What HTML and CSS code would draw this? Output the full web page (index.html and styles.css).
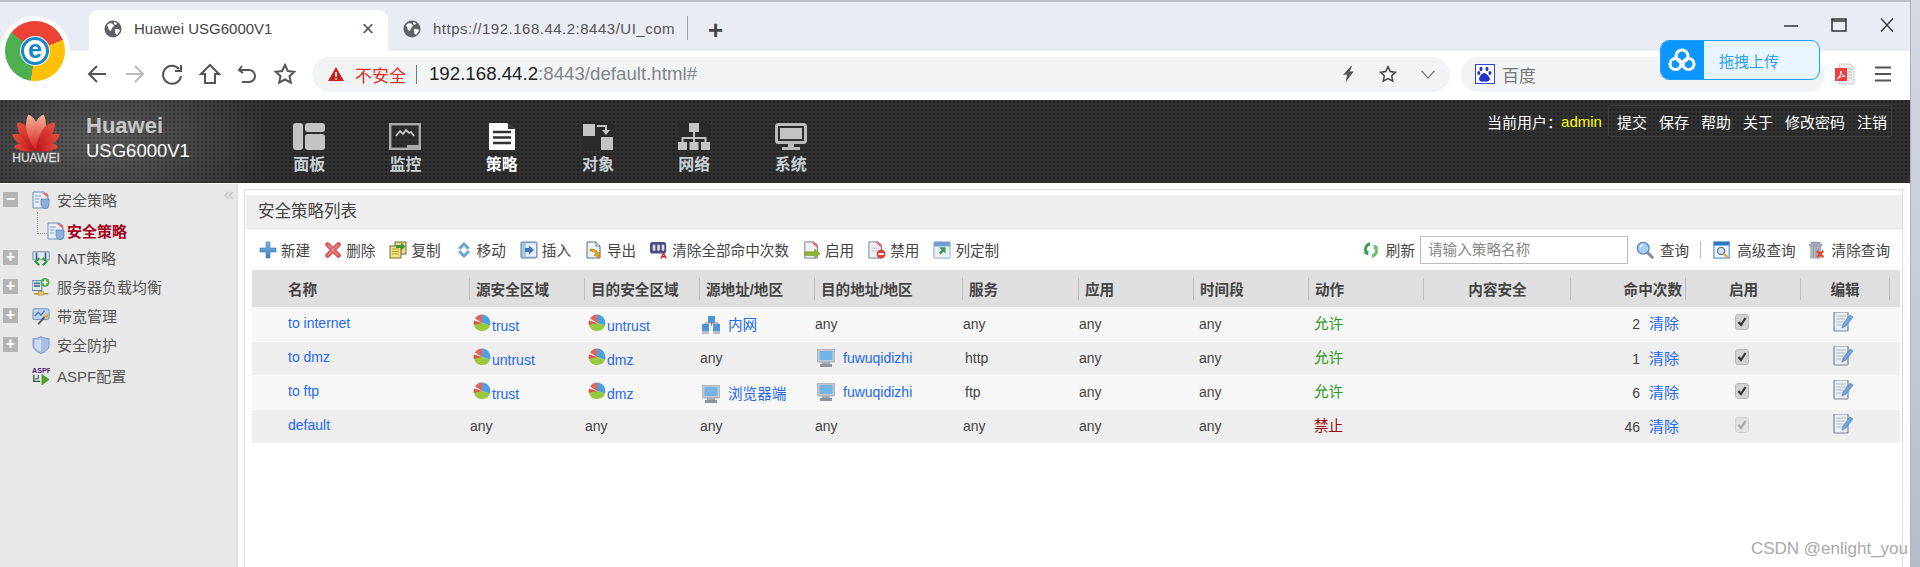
FILE: index.html
```html
<!DOCTYPE html>
<html lang="zh-CN">
<head>
<meta charset="utf-8">
<title>Huawei USG6000V1</title>
<link rel="stylesheet" href="styles.css">
</head>
<body>
<svg class="sprite" width="0" height="0">
  <defs>
    <linearGradient id="blueG" x1="0" y1="0" x2="0" y2="1"><stop offset="0" stop-color="#7db4e0"/><stop offset="1" stop-color="#3f7fb8"/></linearGradient>
    <linearGradient id="petal" gradientUnits="userSpaceOnUse" x1="0" y1="-36" x2="0" y2="0"><stop offset="0" stop-color="#e8503a"/><stop offset="1" stop-color="#b8101c"/></linearGradient>
    <linearGradient id="petalTop" gradientUnits="userSpaceOnUse" x1="0" y1="-36" x2="0" y2="0"><stop offset="0" stop-color="#f7b49a"/><stop offset="1" stop-color="#d0201f"/></linearGradient>
    <path id="pet" d="M0 0C-5-7-7-18-6-26C-5-31-4-34-2-36C2-34 4-30 5-25C6-16 3-6 0 0Z"/>
    <symbol id="globe" viewBox="0 0 18 18"><circle cx="9" cy="9" r="8.500" fill="#5f6368"/><path d="M3 5l3-2 3 1 1 2-2 2-1 3-2-1-1-3zM11 9l4 0 1 2-3 4-2-2z M10 2l3 1-1 2-2-1z" fill="#fff"/></symbol>
    <symbol id="add" viewBox="0 0 18 18"><path d="M7 1h4v6h6v4h-6v6H7v-6H1V7h6z" fill="url(#blueG)" stroke="#3a78ac" stroke-width=".6"/></symbol>
    <symbol id="del" viewBox="0 0 18 18"><path d="M3.500 3.500l11 11M14.500 3.500l-11 11" stroke="#d9565a" stroke-width="4.600" stroke-linecap="round"/><path d="M4 4l10 10M14 4L4 14" stroke="#ee8a8a" stroke-width="1.400" stroke-linecap="round"/></symbol>
    <symbol id="copy" viewBox="0 0 18 18"><rect x="6" y="1" width="11" height="12" fill="#e9d98a" stroke="#6f6a45"/><rect x="1" y="5" width="11" height="12" fill="#f3e27e" stroke="#6f6a45"/><path d="M3 8h7M3 10.500h7M3 13h7" stroke="#b09a35"/><path d="M7 4h5V1.500l4.500 4-4.500 4V7H7z" fill="#3a9a3a"/></symbol>
    <symbol id="move" viewBox="0 0 18 18"><path d="M9 1l6 6-2.500 1.500L9 5 5.500 8.500 3 7zM9 17l-6-6 2.500-1.500L9 13l3.500-3.500L15 11z" fill="#6ba3d6" stroke="#8fbfe6" stroke-width=".4"/></symbol>
    <symbol id="insert" viewBox="0 0 18 18"><rect x="1" y="1" width="16" height="16" rx="1" fill="#a9c6e2" stroke="#5d7ea4"/><rect x="6" y="2.500" width="10" height="13" fill="#e7eef6"/><path d="M5 7h4V4.500l5 4.500-5 4.500V11H5z" fill="#3e78ac"/></symbol>
    <symbol id="export" viewBox="0 0 18 18"><path d="M2 1h9l4 4v12H2z" fill="#eef1f6" stroke="#5f6d84"/><path d="M11 1v4h4" fill="#fff" stroke="#5f6d84"/><path d="M5 8c4 0 7 1 8 4l2-1-1 6-5-3 2-1c-1-2-3-3-6-3z" fill="#e8a21a" stroke="#a06a0a" stroke-width=".5"/></symbol>
    <symbol id="clearall" viewBox="0 0 20 20"><rect x="0" y="1" width="18" height="13" rx="3" fill="#4a4a86"/><rect x="3" y="4" width="3" height="7" rx="1.500" fill="#ddd"/><rect x="8" y="4" width="3" height="7" rx="1.500" fill="#ddd"/><rect x="13" y="4" width="3" height="7" rx="1.500" fill="#ddd"/><path d="M12 19.500l3-6 3 6M13.200 17.500h3.600" fill="none" stroke="#d81818" stroke-width="1.400"/></symbol>
    <symbol id="enable" viewBox="0 0 20 20"><path d="M2 1h10l4 4v14H2z" fill="#f1f2f5" stroke="#6e7890"/><path d="M9 1l7 7V3z" fill="#e66a6a"/><path d="M2 12h11V9l6 5-6 5v-3H2z" fill="#8fb52c" stroke="#5f7d14" stroke-width=".5"/></symbol>
    <symbol id="disable" viewBox="0 0 20 20"><path d="M1 1h10l4 4v14H1z" fill="#f1f2f5" stroke="#6e7890"/><path d="M8 1l7 7V3z" fill="#e66a6a"/><path d="M4 8h6M4 11h5" stroke="#aeb4c2"/><circle cx="14.500" cy="14.500" r="5" fill="#d8443c"/><rect x="11.500" y="13.500" width="6" height="2" fill="#fff"/></symbol>
    <symbol id="custom" viewBox="0 0 20 20"><rect x="1" y="1" width="18" height="18" rx="1" fill="#e9eff6" stroke="#8ea3bc"/><rect x="1" y="1" width="18" height="5" fill="#6f9fd2"/><path d="M7 7h7v7l-2.500-2-3 3-2-2 3-3z" fill="#3f9a55"/></symbol>
    <symbol id="refresh" viewBox="0 0 18 20"><path d="M8 1C2 3 0 8 2 13l-1 1 5 2 0-6-1.500 1C4 8 5 6 8 5z" fill="#3f9c55"/><path d="M10 19c6-2 8-7 6-12l1-1-5-2 0 6 1.500-1c.5 3-.5 5-3.500 6z" fill="#6cbf70"/></symbol>
    <symbol id="search" viewBox="0 0 20 20"><path d="M12 12l6 6" stroke="#8a8f9c" stroke-width="3.400" stroke-linecap="round"/><circle cx="8" cy="8" r="6.500" fill="#a9cdf0" stroke="#5d8cc0" stroke-width="1.500"/><path d="M4.500 7c.5-2 2-3 3.500-3" stroke="#fff" stroke-width="1.200" fill="none"/></symbol>
    <symbol id="adv" viewBox="0 0 20 20"><rect x="1" y="1" width="17" height="18" fill="#eef3f9" stroke="#2c77bd"/><rect x="1" y="1" width="17" height="4" fill="#2c77bd"/><circle cx="9" cy="11" r="4" fill="#cfe2f5" stroke="#5a7a9a" stroke-width="1.400"/><path d="M12 14l4 4" stroke="#e0a020" stroke-width="2.200"/></symbol>
    <symbol id="trash" viewBox="0 0 20 20"><rect x="3" y="1" width="11" height="2" fill="#8a8f9a"/><rect x="1" y="3" width="15" height="3" fill="#a5a9b5"/><path d="M3 6h11v13H3z" fill="#bcc1cc" stroke="#7c818e" stroke-width=".6"/><path d="M6 7v11M9 7v11M12 7v11" stroke="#7f8594"/><path d="M10 11l7 7M17 11l-7 7" stroke="#e0492c" stroke-width="2.600"/></symbol>
    <symbol id="policy" viewBox="0 0 18 18"><path d="M1 1h11l4 3v13H1z" fill="#e8eef7" stroke="#6d93bb"/><path d="M9 1l7 6V3z" fill="#e96f6f"/><path d="M3 5h6M3 8h4M3 11h4" stroke="#7da2c8"/><path d="M9 8h8v5c0 2.500-2 4-4 5-2-1-4-2.500-4-5z" fill="#8fb0da" stroke="#5279ad" stroke-width=".7"/></symbol>
    <symbol id="nat" viewBox="0 0 20 18"><path d="M1 2h18v9H1z" fill="#dde6ef" stroke="#6e8298"/><path d="M5 3v7M15 3v7" stroke="#4d6a86" stroke-width="2"/><path d="M8 9l-4 4 4 4M12 9l4 4-4 4" fill="none" stroke="#2d9a45" stroke-width="2.400"/></symbol>
    <symbol id="server" viewBox="0 0 20 20"><rect x="0" y="3" width="11" height="11" fill="#dfe8f3" stroke="#4f6f9c"/><rect x="2" y="5" width="7" height="2" fill="#4a76ad"/><rect x="2" y="8" width="7" height="2" fill="#4a76ad"/><circle cx="14.500" cy="5" r="5" fill="#4fb04f"/><path d="M14.500 2v6M11.500 5h6" stroke="#fff" stroke-width="1.600"/><path d="M10 14v3M2 17.500h16" stroke="#b09030" stroke-width="1.500"/><rect x="7" y="15" width="6" height="4" fill="#e9c75e" stroke="#9c8330" stroke-width=".5"/></symbol>
    <symbol id="band" viewBox="0 0 20 20"><rect x="1" y="2" width="18" height="12" rx="2" fill="#bcd2ec" stroke="#6a8ab0"/><path d="M3 10l4-4 3 3 4-5" stroke="#3f6ea8" stroke-width="1.400" fill="none"/><path d="M7 19l7-8" stroke="#5c5c5c" stroke-width="2.200"/><path d="M13 11l3-3 3 1-2 3z" fill="#e2a028"/></symbol>
    <symbol id="shield" viewBox="0 0 18 18"><path d="M9 .5c2 1.500 5 2 8 2v7c0 4-4 6.500-8 8-4-1.500-8-4-8-8v-7c3 0 6-.5 8-2z" fill="#aabfe2" stroke="#7e96c4"/><path d="M9 2.500v13c-3-1.200-6-3-6-6.500V4c2.500 0 4.500-.5 6-1.500z" fill="#d0dcf0"/></symbol>
    <symbol id="aspf" viewBox="0 0 20 20"><text x="0" y="7" class="aspf-txt">ASPF</text><path d="M2 9v7h7" fill="none" stroke="#2a5a2a" stroke-width="1.400"/><path d="M7 9v4h-4" fill="none" stroke="#555" stroke-width="1.200"/><path d="M11 8l8 6-8 6z" fill="#4aa52a" stroke="#2d7a1c" stroke-width=".5"/></symbol>
    <symbol id="zone" viewBox="0 0 18 18"><path d="M9 9L2 4.500A8.500 8.500 0 0 1 9 .5z" fill="#e0675c"/><path d="M9 9V.5a8.500 8.500 0 0 1 8 11z" fill="#4e9fdc"/><path d="M9 9l8 2.500A8.500 8.500 0 0 1 1.500 12.500L1 7z" fill="#97c93c"/><path d="M1 6.500L9 9 .8 11A8.500 8.500 0 0 1 1 6.500z" fill="#d9574e"/></symbol>
    <symbol id="lan" viewBox="0 0 18 18"><rect x="6" y="0" width="7" height="7" fill="#4f94d8"/><rect x="0" y="8" width="7" height="7" fill="#4f94d8"/><rect x="11" y="8" width="7" height="7" fill="#4f94d8"/><path d="M9.500 7v3M3 8v-1h13v1" stroke="#7a8592" fill="none"/><rect x="0" y="15" width="7" height="3" fill="#b5bcc6"/><rect x="11" y="15" width="7" height="3" fill="#b5bcc6"/></symbol>
    <symbol id="host" viewBox="0 0 18 18"><rect x="0" y="0" width="18" height="13" rx="1" fill="#c3c8cf" stroke="#8f959d" stroke-width=".6"/><rect x="2.500" y="2" width="13" height="9" fill="#74b4e6"/><rect x="5" y="13" width="8" height="2" fill="#a7acb4"/><rect x="3" y="15" width="12" height="3" fill="#8f949c"/></symbol>
    <symbol id="check" viewBox="0 0 14 16"><rect x=".5" y=".5" width="13" height="15" rx="2.500" fill="#d2d2d2" stroke="#b8b8b8"/><path d="M3.500 8l2.500 3 4.500-7" fill="none" stroke="#333" stroke-width="2.200"/></symbol>
    <symbol id="checkoff" viewBox="0 0 14 16"><rect x=".5" y=".5" width="13" height="15" rx="2.500" fill="#e2e2e2" stroke="#d2d2d2"/><path d="M3.500 8l2.500 3 4.500-7" fill="none" stroke="#a8a8a8" stroke-width="2.200"/></symbol>
    <symbol id="edit" viewBox="0 0 20 20"><rect x="1" y="0" width="14" height="19" rx="1" fill="#e9ecf0" stroke="#7e858e" stroke-width="1.200"/><path d="M3.500 4h9M3.500 7h9M3.500 10h7M3.500 13h5" stroke="#b4bac2"/><path d="M9 16l1-4 7-9 3 2-7 9z" fill="#6fa4dc" stroke="#3f74ae" stroke-width=".6"/></symbol>
  </defs>
</svg>

<div class="page">
  <div class="viewport">
    <div class="tabbar">
      <div class="tab tab-active">
        <svg class="tab-ico"><use href="#globe"/></svg>
        <span class="tab-title">Huawei USG6000V1</span>
        <span class="tab-x">×</span>
      </div>
      <div class="tab tab-other">
        <svg class="tab-ico"><use href="#globe"/></svg>
        <span class="tab-title tab-cut">https://192.168.44.2:8443/UI_com</span>
      </div>
      <span class="tab-sep"></span>
      <span class="tab-plus">+</span>
      <div class="winctl">
        <svg class="win-ico" viewBox="0 0 16 14"><path d="M1 8h14" stroke="#333" stroke-width="1.500"/></svg>
        <svg class="win-ico" viewBox="0 0 16 14"><rect x="1" y="1" width="14" height="12" fill="none" stroke="#333" stroke-width="1.500"/><path d="M1 3h14" stroke="#333" stroke-width="1.500"/></svg>
        <svg class="win-ico" viewBox="0 0 16 14"><path d="M2 .5l12 13M14 .5l-12 13" stroke="#333" stroke-width="1.300"/></svg>
      </div>
    </div>

    <div class="toolbar">
      <div class="navbtns">
        <svg class="nb" viewBox="0 0 22 22"><path d="M20 11H4M11 3l-8 8 8 8" fill="none" stroke="#555" stroke-width="2"/></svg>
        <svg class="nb" viewBox="0 0 22 22"><path d="M2 11h16M11 3l8 8-8 8" fill="none" stroke="#bbb" stroke-width="2"/></svg>
        <svg class="nb" viewBox="0 0 22 22"><path d="M18 6a9 9 0 1 0 2 7" fill="none" stroke="#555" stroke-width="2"/><path d="M20 2v6h-6" fill="none" stroke="#555" stroke-width="2"/></svg>
        <svg class="nb" viewBox="0 0 22 22"><path d="M11 2l9 9h-4v9H6v-9H2z" fill="none" stroke="#555" stroke-width="2"/></svg>
        <svg class="nb" viewBox="0 0 22 22"><path d="M6 3L3 7l4 3M3 7h10a5.500 5.500 0 0 1 0 12H6" fill="none" stroke="#555" stroke-width="2"/></svg>
        <svg class="nb" viewBox="0 0 22 22"><path d="M11 2l2.800 6 6.500.8-4.800 4.400 1.300 6.500L11 16.500l-5.800 3.200 1.300-6.500L1.700 8.800 8.200 8z" fill="none" stroke="#555" stroke-width="2"/></svg>
      </div>
      <div class="omni">
        <svg class="warn" viewBox="0 0 16 16"><path d="M8 1l8 14H0z" fill="#c5221f"/><rect x="7.200" y="6" width="1.600" height="5" fill="#fff"/><rect x="7.200" y="12" width="1.600" height="1.600" fill="#fff"/></svg>
        <span class="insecure">不安全</span>
        <span class="omni-sep"></span>
        <span class="url"><b>192.168.44.2</b>:8443/default.html#</span>
        <span class="omni-right">
          <svg class="om-ico" viewBox="0 0 18 22"><path d="M13 1L3 12h5l-2 9 10-13h-5l3-7z" fill="#555"/></svg>
          <svg class="om-ico" viewBox="0 0 22 22"><path d="M11 2l2.800 6 6.500.8-4.800 4.400 1.300 6.500L11 16.500l-5.800 3.200 1.300-6.500L1.700 8.800 8.200 8z" fill="none" stroke="#444" stroke-width="1.800"/></svg>
          <svg class="om-ico" viewBox="0 0 22 22"><path d="M3 7l8 9 8-9" fill="none" stroke="#777" stroke-width="1.500"/></svg>
        </span>
      </div>
      <div class="searchbox">
        <svg class="baidu" viewBox="0 0 20 20"><rect x=".5" y=".5" width="19" height="19" fill="#fff" stroke="#3344dd"/><ellipse cx="6" cy="5" rx="1.500" ry="2.200" fill="#2233cc"/><ellipse cx="12" cy="5" rx="1.500" ry="2.200" fill="#2233cc"/><ellipse cx="3.800" cy="9" rx="1.500" ry="2" fill="#2233cc"/><ellipse cx="15" cy="9" rx="1.500" ry="2" fill="#2233cc"/><path d="M9 9c-2 0-5 4-5 6s2 3 5 2.500c3 .5 6-.5 6-2.500s-4-6-6-6z" fill="#2233cc"/></svg>
        <span class="search-word">百度</span>
      </div>
      <div class="extras">
        <svg class="pdf" viewBox="0 0 20 22"><path d="M4 1h11l4 4v16H4z" fill="#eee" stroke="#ccc"/><path d="M12 6h5M12 9h5M12 12h5M12 15h5" stroke="#bbb"/><rect x="0" y="5" width="12" height="13" fill="#ef3e42"/><path d="M2 16c3-2 4-5 4-8 0 3 2 5 4 5-3 0-5 1-8 3z" fill="none" stroke="#fff"/></svg>
        <svg class="menu" viewBox="0 0 16 16"><path d="M0 1.500h16M0 8h16M0 14.500h16" stroke="#555" stroke-width="2"/></svg>
      </div>
    </div>

    <div class="upload">
      <span class="upload-ico">
        <svg class="cloud" viewBox="0 0 28 24"><g fill="none" stroke="#fff" stroke-width="3.200"><circle cx="14" cy="8" r="6"/><circle cx="7.500" cy="16" r="5.500"/><circle cx="20.500" cy="16" r="5.500"/></g></svg>
      </span>
      <span class="upload-txt">拖拽上传</span>
    </div>

    <div class="chromium"><span class="chromium-core">e</span></div>

    <header class="apphead">
      <div class="brand">
        <div class="hw-logo">
          <svg class="hw-flower" viewBox="-27 -38 54 40">
            <use href="#pet" fill="url(#petal)" transform="rotate(-78) scale(.62)"/>
            <use href="#pet" fill="url(#petal)" transform="rotate(-54) scale(.78)"/>
            <use href="#pet" fill="url(#petal)" transform="rotate(-31) scale(.92)"/>
            <use href="#pet" fill="url(#petalTop)" transform="rotate(-9)"/>
            <use href="#pet" fill="url(#petalTop)" transform="scale(-1 1) rotate(-9)"/>
            <use href="#pet" fill="url(#petal)" transform="scale(-1 1) rotate(-31) scale(.92)"/>
            <use href="#pet" fill="url(#petal)" transform="scale(-1 1) rotate(-54) scale(.78)"/>
            <use href="#pet" fill="url(#petal)" transform="scale(-1 1) rotate(-78) scale(.62)"/>
          </svg>
          <span class="hw-word">HUAWEI</span>
        </div>
        <div class="brand-txt">
          <span class="brand-a">Huawei</span>
          <span class="brand-b">USG6000V1</span>
        </div>
      </div>
      <nav class="appnav">
        <a class="navitem">
          <svg class="navico" viewBox="0 0 32 27"><rect x="0" y="0" width="10" height="27" rx="3" fill="#c4c4c4"/><rect x="12" y="0" width="20" height="9" rx="3" fill="#c4c4c4"/><rect x="12" y="11" width="20" height="16" rx="3" fill="#c4c4c4"/></svg>
          面板
        </a>
        <a class="navitem">
          <svg class="navico" viewBox="0 0 32 27"><rect x="1.200" y="1.200" width="29.600" height="24.600" fill="none" stroke="#aaa" stroke-width="2.400"/><path d="M7 13l4-5 3 3 3-4 3 3 2-1 3 4" fill="none" stroke="#c8c8c8" stroke-width="1.800"/><path d="M18 27v-5h14v5z" fill="#aaa"/></svg>
          监控
        </a>
        <a class="navitem nav-on">
          <svg class="navico" viewBox="0 0 32 27"><path d="M3 0h18l8 6v21H3z" fill="#fff"/><path d="M22 0l7 6h-7z" fill="#333"/><path d="M7 9h18M7 14.500h18M7 20h18" stroke="#333" stroke-width="2.400"/></svg>
          策略
        </a>
        <a class="navitem">
          <svg class="navico" viewBox="0 0 32 27"><rect x="0" y="0" width="32" height="27" fill="#2b2b2b"/><rect x="1" y="1" width="12" height="12" fill="#c4c4c4"/><rect x="19" y="14" width="12" height="13" fill="#c4c4c4"/><path d="M15 3h9v5" fill="none" stroke="#c4c4c4" stroke-width="2"/><path d="M20 7h8l-4 5z" fill="#c4c4c4"/></svg>
          对象
        </a>
        <a class="navitem">
          <svg class="navico" viewBox="0 0 32 27"><rect x="0" y="0" width="32" height="27" fill="#2b2b2b"/><rect x="11" y="0" width="10" height="9" fill="#c4c4c4"/><rect x="0" y="19" width="9" height="8" fill="#c4c4c4"/><rect x="11.500" y="19" width="9" height="8" fill="#c4c4c4"/><rect x="23" y="19" width="9" height="8" fill="#c4c4c4"/><path d="M16 9v10M4.500 19v-4h23v4" fill="none" stroke="#c4c4c4" stroke-width="2"/></svg>
          网络
        </a>
        <a class="navitem">
          <svg class="navico" viewBox="0 0 32 27"><rect x="1.500" y="1.500" width="29" height="18" rx="2" fill="none" stroke="#bbb" stroke-width="3"/><rect x="5" y="5" width="22" height="11" fill="#c4c4c4"/><rect x="13" y="20" width="6" height="4" fill="#bbb"/><rect x="7" y="24" width="18" height="3" fill="#bbb"/></svg>
          系统
        </a>
      </nav>
      <div class="usermenu">
        <span class="curuser">当前用户：</span><span class="uname">admin</span>
        <div class="userlinks">
          <a>提交</a><a>保存</a><a>帮助</a><a>关于</a><a>修改密码</a><a>注销</a>
        </div>
      </div>
    </header>

    <div class="workspace">
      <aside class="sidebar">
        <span class="collapse">«</span>
        <div class="tree-row"><span class="tg">−</span><svg class="ti"><use href="#policy"/></svg><span>安全策略</span></div>
        <div class="tree-row tree-child"><span class="dots"></span><svg class="ti"><use href="#policy"/></svg><span>安全策略</span></div>
        <div class="tree-row"><span class="tg">+</span><svg class="ti"><use href="#nat"/></svg><span>NAT策略</span></div>
        <div class="tree-row"><span class="tg">+</span><svg class="ti"><use href="#server"/></svg><span>服务器负载均衡</span></div>
        <div class="tree-row"><span class="tg">+</span><svg class="ti"><use href="#band"/></svg><span>带宽管理</span></div>
        <div class="tree-row"><span class="tg">+</span><svg class="ti"><use href="#shield"/></svg><span>安全防护</span></div>
        <div class="tree-row tree-last"><span class="tg tg-none"></span><svg class="ti"><use href="#aspf"/></svg><span>ASPF配置</span></div>
      </aside>

      <main class="content">
        <section class="panel">
          <h2 class="panel-title">安全策略列表</h2>
          <div class="actions">
            <a class="act"><svg class="ai"><use href="#add"/></svg>新建</a>
            <a class="act"><svg class="ai"><use href="#del"/></svg>删除</a>
            <a class="act"><svg class="ai"><use href="#copy"/></svg>复制</a>
            <a class="act"><svg class="ai"><use href="#move"/></svg>移动</a>
            <a class="act"><svg class="ai"><use href="#insert"/></svg>插入</a>
            <a class="act"><svg class="ai"><use href="#export"/></svg>导出</a>
            <a class="act"><svg class="ai"><use href="#clearall"/></svg>清除全部命中次数</a>
            <a class="act"><svg class="ai"><use href="#enable"/></svg>启用</a>
            <a class="act"><svg class="ai"><use href="#disable"/></svg>禁用</a>
            <a class="act"><svg class="ai"><use href="#custom"/></svg>列定制</a>
            <div class="act-right">
              <a class="act"><svg class="ai"><use href="#refresh"/></svg>刷新</a>
              <input class="query" type="text" placeholder="请输入策略名称">
              <a class="act"><svg class="ai"><use href="#search"/></svg>查询</a>
              <span class="act-sep"></span>
              <a class="act"><svg class="ai"><use href="#adv"/></svg>高级查询</a>
              <a class="act"><svg class="ai"><use href="#trash"/></svg>清除查询</a>
            </div>
          </div>
          <table class="grid">
            <colgroup>
              <col class="w218"><col class="w115"><col class="w115"><col class="w115"><col class="w148"><col class="w116"><col class="w115"><col class="w115"><col class="w115"><col class="w147"><col class="w115"><col class="w115"><col class="w99">
            </colgroup>
            <thead>
              <tr>
                <th>名称</th><th>源安全区域</th><th>目的安全区域</th><th>源地址/地区</th><th>目的地址/地区</th><th>服务</th><th>应用</th><th>时间段</th><th>动作</th><th class="tc">内容安全</th><th class="tr">命中次数</th><th class="tc">启用</th><th class="tc">编辑</th>
              </tr>
            </thead>
            <tbody>
              <tr>
                <td><a class="lnk up">to internet</a></td>
                <td><svg class="zi"><use href="#zone"/></svg><a class="lnk">trust</a></td>
                <td><svg class="zi"><use href="#zone"/></svg><a class="lnk">untrust</a></td>
                <td><svg class="oi"><use href="#lan"/></svg><a class="lnk cjk">内网</a></td>
                <td>any</td><td>any</td><td>any</td><td>any</td>
                <td class="allow">允许</td><td></td>
                <td class="hits">2<a class="lnk clr">清除</a></td>
                <td class="tc"><svg class="cb"><use href="#check"/></svg></td>
                <td class="tc"><svg class="ed"><use href="#edit"/></svg></td>
              </tr>
              <tr>
                <td><a class="lnk up">to dmz</a></td>
                <td><svg class="zi"><use href="#zone"/></svg><a class="lnk">untrust</a></td>
                <td><svg class="zi"><use href="#zone"/></svg><a class="lnk">dmz</a></td>
                <td>any</td>
                <td><svg class="oi"><use href="#host"/></svg><a class="lnk">fuwuqidizhi</a></td>
                <td class="svc">http</td><td>any</td><td>any</td>
                <td class="allow">允许</td><td></td>
                <td class="hits">1<a class="lnk clr">清除</a></td>
                <td class="tc"><svg class="cb"><use href="#check"/></svg></td>
                <td class="tc"><svg class="ed"><use href="#edit"/></svg></td>
              </tr>
              <tr>
                <td><a class="lnk up">to ftp</a></td>
                <td><svg class="zi"><use href="#zone"/></svg><a class="lnk">trust</a></td>
                <td><svg class="zi"><use href="#zone"/></svg><a class="lnk">dmz</a></td>
                <td><svg class="oi"><use href="#host"/></svg><a class="lnk cjk">浏览器端</a></td>
                <td><svg class="oi"><use href="#host"/></svg><a class="lnk">fuwuqidizhi</a></td>
                <td class="svc">ftp</td><td>any</td><td>any</td>
                <td class="allow">允许</td><td></td>
                <td class="hits">6<a class="lnk clr">清除</a></td>
                <td class="tc"><svg class="cb"><use href="#check"/></svg></td>
                <td class="tc"><svg class="ed"><use href="#edit"/></svg></td>
              </tr>
              <tr>
                <td><a class="lnk up">default</a></td>
                <td>any</td><td>any</td><td>any</td><td>any</td><td>any</td><td>any</td><td>any</td>
                <td class="deny">禁止</td><td></td>
                <td class="hits">46<a class="lnk clr">清除</a></td>
                <td class="tc"><svg class="cb"><use href="#checkoff"/></svg></td>
                <td class="tc"><svg class="ed"><use href="#edit"/></svg></td>
              </tr>
            </tbody>
          </table>
        </section>
        <div class="watermark">CSDN @enlight_you</div>
      </main>
    </div>
  </div>
  <div class="scrollstrip"></div>
</div>
</body>
</html>
```
FILE: styles.css
```css
* { box-sizing: border-box; }
html, body { margin: 0; height: 100%; overflow: hidden; }
body { font-family: "Liberation Sans", "Noto Sans CJK SC", sans-serif; color: #444; background: #fff; }
.sprite { display: block; height: 0; width: 0; }
a { color: inherit; text-decoration: none; }

.page { display: flex; height: 567px; width: 1920px; }
.viewport { position: relative; width: 1910px; height: 567px; display: flex; flex-direction: column; overflow: hidden; border-top: 2px solid #bcc0c8; }
.scrollstrip { width: 10px; height: 567px; background: linear-gradient(#d5d9e0, #c3cad6 60%, #b4bcc8); border-left: 1px solid #aab2be; }

/* tab strip */
.tabbar { height: 49px; background: #e9ecf3; display: flex; align-items: flex-end; padding-left: 89px; flex: none; }
.tab { height: 41px; display: flex; align-items: center; font-size: 15px; color: #444; }
.tab-active { width: 299px; background: #fff; border-radius: 9px 9px 0 0; padding: 0 12px 4px 15px; }
.tab-other { width: 299px; padding: 0 11px 4px 15px; }
.tab-ico { width: 18px; height: 18px; flex: none; margin-right: 12px; }
.tab-title { flex: 1; white-space: nowrap; overflow: hidden; }
.tab-cut { color: #555; letter-spacing: .5px; }
.tab-x { font-size: 22px; color: #555; line-height: 1; width: 16px; text-align: center; }
.tab-sep { width: 1px; height: 24px; background: #9aa0a8; margin: 0 0 11px 0; }
.tab-plus { font-size: 26px; font-weight: 700; color: #444; line-height: 1; margin: 0 0 8px 20px; }
.winctl { margin-left: auto; align-self: flex-start; display: flex; gap: 32px; padding: 16px 15px 0 0; }
.win-ico { width: 16px; height: 14px; }

/* toolbar */
.toolbar { height: 49px; background: #fff; display: flex; align-items: center; flex: none; padding: 0 0 3px 86px; }
.navbtns { display: flex; gap: 15.600px; }
.nb { width: 22px; height: 22px; }
.omni { margin-left: 16px; width: 1138px; height: 35px; border-radius: 18px; background: #f1f3f4; display: flex; align-items: center; padding: 0 13px 0 16px; }
.warn { width: 16px; height: 16px; flex: none; }
.insecure { color: #d93025; font-size: 17px; margin-left: 11px; }
.omni-sep { width: 1px; height: 19px; background: #777; margin: 0 12px 0 10px; }
.url { font-size: 18.700px; color: #80868b; white-space: nowrap; }
.url b { font-weight: 400; color: #222; }
.omni-right { margin-left: auto; display: flex; gap: 22px; align-items: center; }
.om-ico { width: 18px; height: 18px; }
.searchbox { margin-left: 11px; width: 364px; height: 35px; border-radius: 18px; background: #f1f3f4; display: flex; align-items: center; padding-left: 14px; }
.baidu { width: 20px; height: 20px; }
.search-word { font-size: 17px; color: #777; margin-left: 7px; }
.extras { display: flex; align-items: center; margin-left: 10px; gap: 20px; }
.pdf { width: 20px; height: 22px; }
.menu { width: 16px; height: 16px; }

/* overlays on browser chrome */
.upload { position: absolute; left: 1660px; top: 38px; width: 160px; height: 40px; display: flex; border-radius: 9px; overflow: hidden; background: #e8f5ff; border: 1px solid #1ea0ff; }
.upload-ico { width: 44px; background: #0c96ff; display: flex; align-items: center; justify-content: center; margin: -1px 0 -1px -1px; }
.cloud { width: 28px; height: 24px; }
.upload-txt { color: #2ea0f5; font-size: 15px; align-self: center; margin-left: 15px; }
.chromium { position: absolute; left: 5px; top: 19px; width: 60px; height: 60px; border-radius: 50%; background: conic-gradient(#4caf50 -52deg, #ea4335 -52deg 68deg, #ffc107 68deg 188deg, #4caf50 188deg 308deg, #ea4335 308deg); box-shadow: 0 0 0 5px #fff; display: flex; align-items: center; justify-content: center; }
.chromium-core { width: 28px; height: 28px; border-radius: 50%; background: #fff; border: 3px solid #1787c8; box-shadow: 0 0 0 1px #fff; color: #1787c8; font-size: 25px; font-weight: 700; line-height: 19px; text-align: center; }

/* app header */
.apphead { height: 83px; flex: none; display: flex; color: #fff; border-bottom: 1px solid #3a2a2a; background-color: #313131; background-image: radial-gradient(circle, #202020 1px, transparent 1.400px); background-size: 4px 4px; }
.brand { width: 261px; flex: none; display: flex; padding: 12px 0 0 9px; background-image: radial-gradient(circle, rgba(32,32,32,.5) 1px, transparent 1.400px), radial-gradient(ellipse 180px 90px at 100px 40px, #5e5e5e, rgba(70,70,70,.6) 70%, rgba(50,50,50,0)); background-size: 4px 4px, 100% 100%; }
.hw-logo { width: 54px; display: flex; flex-direction: column; align-items: center; }
.hw-flower { width: 54px; height: 40px; }
.hw-word { font-size: 12px; color: #ddd; line-height: 12px; margin-top: 0; white-space: nowrap; -webkit-text-stroke: .3px #ddd; }
.brand-txt { margin-left: 23px; display: flex; flex-direction: column; }
.brand-a { font-size: 22px; font-weight: 700; color: #c8c8c8; line-height: 27px; }
.brand-b { font-size: 18.500px; color: #fff; line-height: 23px; }
.appnav { display: flex; padding-top: 23px; width: 580px; }
.navitem { width: 96.300px; height: 58px; display: flex; flex-direction: column; align-items: center; gap: 3px; font-size: 16px; font-weight: 700; color: #c8d0d4; line-height: 24px; }
.nav-on { color: #fff; }
.navico { width: 32px; height: 27px; flex: none; }
.usermenu { margin-left: auto; margin-right: 18px; margin-top: 5px; display: flex; align-items: center; height: 32px; font-size: 15px; }
.curuser { color: #fff; }
.uname { color: #ff0; margin: 0 6px 0 -1px; }
.userlinks { display: flex; gap: 12px; height: 32px; align-items: center; padding: 0 4px 0 8px; border: 1px solid #3f3f3f; border-radius: 2px; }

/* workspace */
.workspace { flex: 1; display: flex; min-height: 0; border-top: 1px solid #fff; }
.sidebar { position: relative; width: 238px; flex: none; background: #e8e8e8; padding-top: 1px; font-size: 15px; color: #555; border-right: 2px solid #e0e0e0; }
.collapse { position: absolute; left: 224px; top: 0; font-size: 18px; color: #c4c4c4; line-height: 20px; }
.tree-row { height: 29px; display: flex; align-items: center; white-space: nowrap; }
.tg { width: 15px; height: 15px; margin: 0 14px 0 3px; background: #b4b4b4; color: #fff; font-weight: 700; font-size: 16px; line-height: 14px; text-align: center; flex: none; }
.tg-none { background: none; }
.ti { width: 18px; height: 18px; margin-right: 7px; flex: none; }
.tree-child { margin: 2px 0 -2px; padding-left: 37px; color: #a50021; font-weight: 700; }
.tree-child .ti { margin-right: 2px; }
.dots { width: 10px; height: 22px; margin-top: -16px; border-left: 1px dotted #999; border-bottom: 1px dotted #999; flex: none; }
.tree-last { margin-top: 2px; }

.content { position: relative; flex: 1; min-width: 0; padding: 5px 7px 0 6px; }
.panel { height: 100%; border: 1px solid #dcdcdc; border-bottom: none; padding: 5px 0 0 1px; }
.panel-title { margin: 0; height: 34px; background: #efefef; border-bottom: 1px solid #e6e6e6; font-size: 16.500px; font-weight: 400; line-height: 33px; padding-left: 12px; color: #444; }
.actions { height: 41px; display: flex; align-items: center; padding: 0 12px 0 13px; font-size: 14.600px; gap: 14px; color: #444; }
.act { display: flex; align-items: center; white-space: nowrap; }
.ai { width: 18px; height: 18px; margin-right: 4px; flex: none; }
.act-right { margin-left: auto; display: flex; align-items: center; gap: 8px; }
.act-right .ai { margin-right: 6px; }
.query { width: 208px; height: 28px; margin-left: -3px; border: 1px solid #bbb; padding: 0 7px; font: 14.600px "Liberation Sans", "Noto Sans CJK SC", sans-serif; color: #444; background: #fff; outline: none; }
.query::placeholder { color: #888; }
.act-sep { width: 1px; height: 17px; background: #bbb; margin: 0 4px 0 3px; }
.act-right .act:last-child { margin-left: 4px; }

.grid { margin-left: 6px; width: 1647px; table-layout: fixed; border-collapse: collapse; font-size: 14px; color: #444; }
.w218 { width: 218px; } .w115 { width: 115px; } .w116 { width: 116px; } .w147 { width: 147px; } .w148 { width: 148px; } .w99 { width: 99px; }
.grid th { height: 37px; padding: 0 0 0 6px; background: #dfdfdf linear-gradient(#bdbdbd, #bdbdbd) no-repeat right center / 1px 22px; text-align: left; font-size: 14.600px; font-weight: 700; white-space: nowrap; color: #444; }
.grid th:first-child { padding-left: 36px; }
.grid th:last-child { background-position: right 10px center; }
.grid th.tc { text-align: center; padding: 0; }
.grid th.tr { text-align: right; padding: 0 4px 0 0; }
.grid th:last-child.tc { padding: 0 11px 0 0; }
.grid td { height: 34px; padding: 0; border-bottom: 1px solid #fff; white-space: nowrap; vertical-align: middle; }
.grid tbody tr:nth-child(odd) td { background: #f7f7f7; }
.grid tbody tr:nth-child(even) td { background: #eee; }
.grid td:first-child { padding-left: 36px; }
.grid td:nth-child(8) { padding-left: 5px; }
.grid td:nth-child(9) { padding-left: 5px; font-size: 14.600px; }
.grid td.tc { text-align: center; padding-bottom: 4px; }
.grid td:last-child { padding-right: 15px; }
.lnk { color: #2468f2; }
.up { position: relative; top: -1px; }
.cjk { font-size: 14.600px; }
.zi { width: 18px; height: 18px; margin-left: 3px; margin-right: 1px; vertical-align: -1px; }
.oi { width: 18px; height: 18px; margin: 0 8px 0 2px; vertical-align: -4px; }
.svc { padding-left: 2px !important; }
.allow, .deny { padding-bottom: 3px !important; }
.allow { color: #2a9a1a; }
.deny { color: #a00000; }
.hits { text-align: right; padding-right: 7px !important; padding-bottom: 2px !important; }
.clr { font-size: 15px; margin-left: 9px; }
.cb { width: 14px; height: 16px; vertical-align: middle; margin-left: -4px; }
.ed { width: 20px; height: 20px; vertical-align: middle; }
.aspf-txt { font: 700 8px "Liberation Sans", sans-serif; fill: #4a1a7a; }
.watermark { position: absolute; right: 2px; bottom: 8px; font-size: 17px; color: #a8a8a8; white-space: nowrap; }
```
